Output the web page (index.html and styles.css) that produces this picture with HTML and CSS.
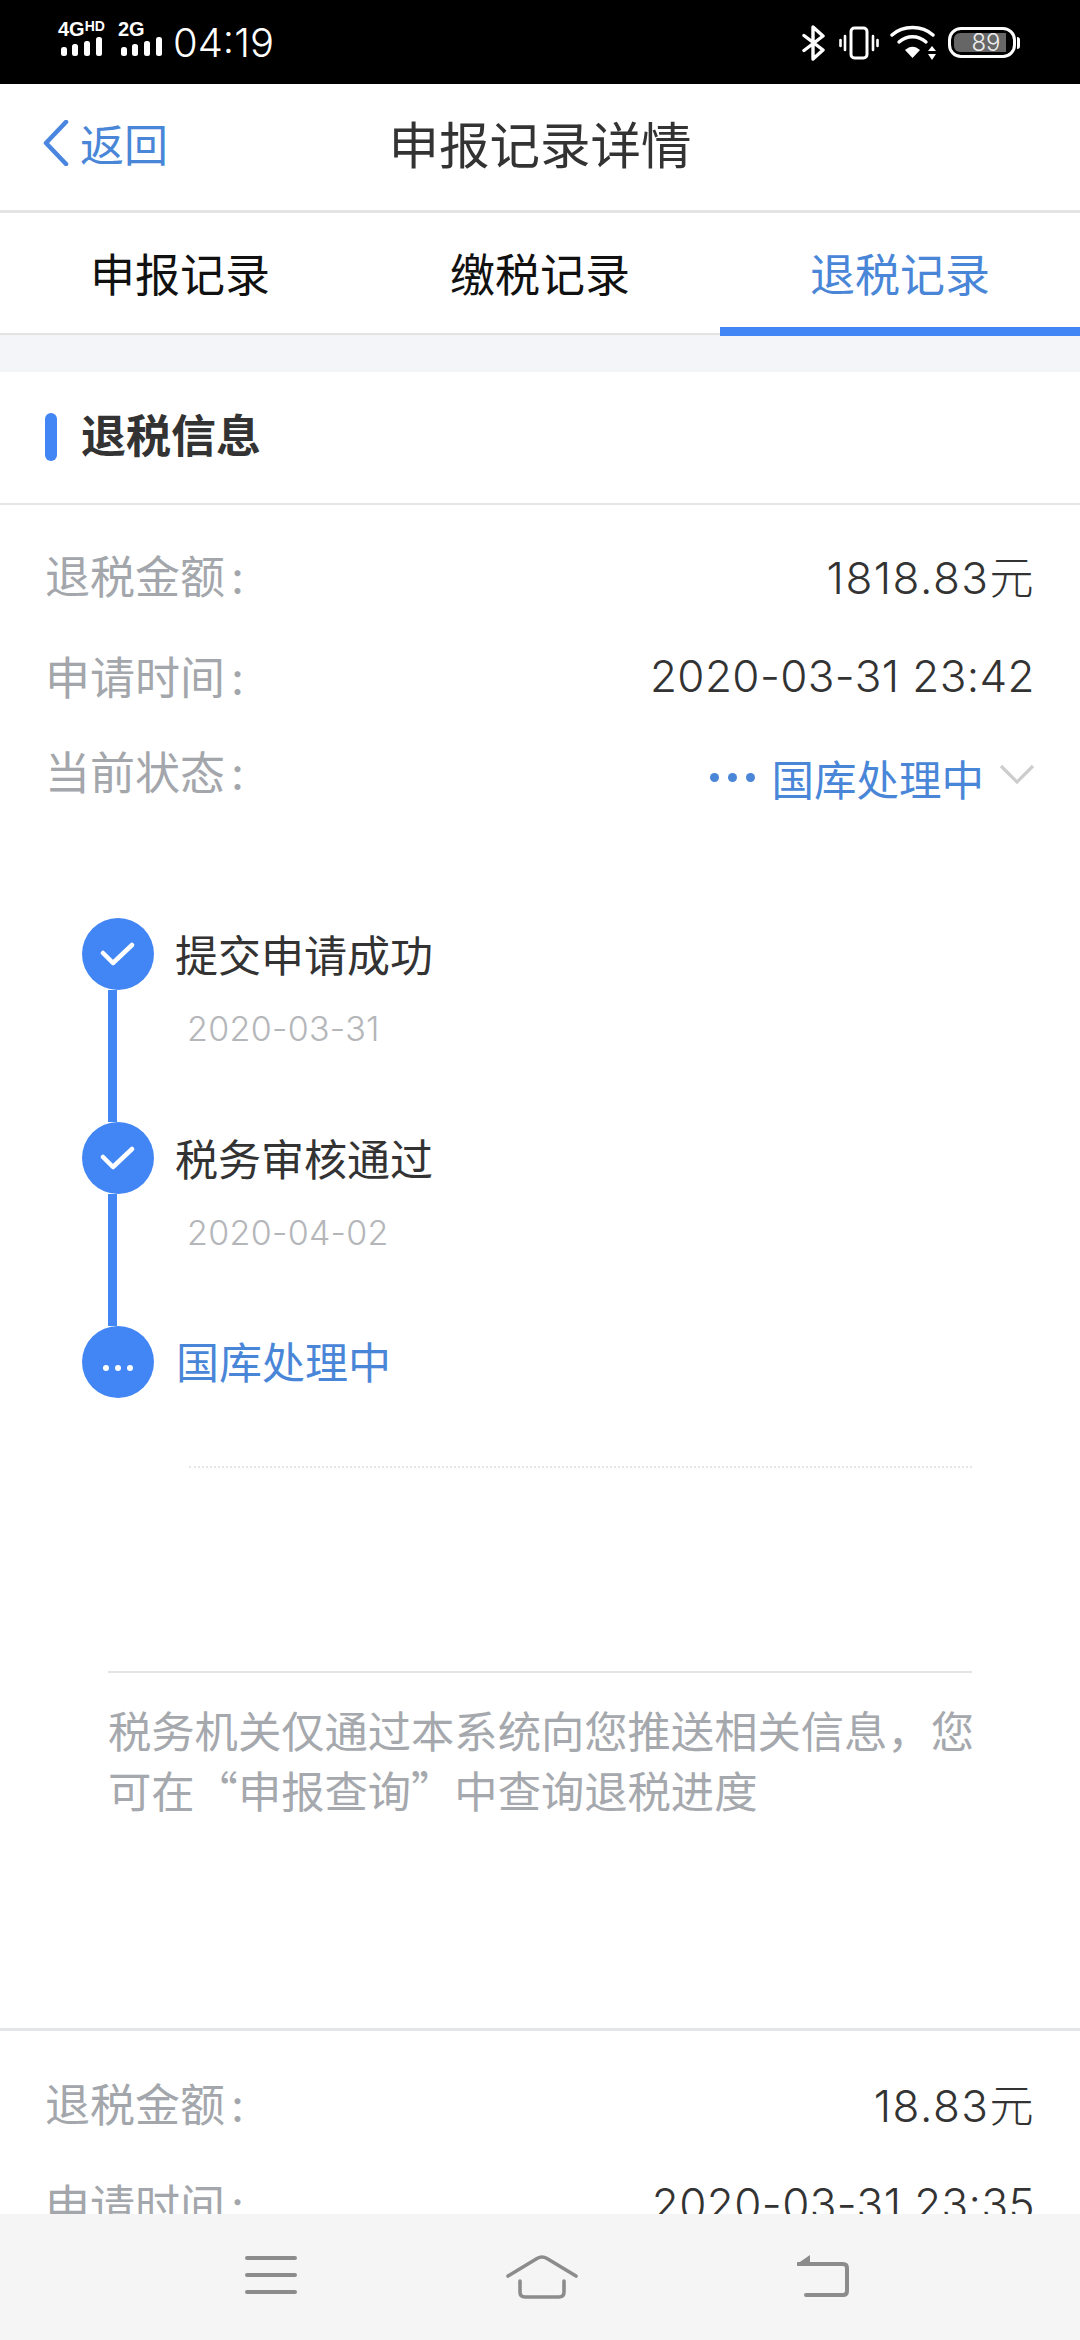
FILE: index.html
```html
<!DOCTYPE html>
<html lang="zh-CN">
<head>
    <meta charset="UTF-8">
    <meta name="viewport" content="width=device-width, initial-scale=1.0">
    <title>申报记录详情</title>
    <link rel="stylesheet" href="styles.css">
</head>

<body>
<div class="page">
    <!-- Status bar -->
    <div class="statusbar">
        <div class="signal">
            <div class="net net-first">
                <span class="net-label">4G<sup>HD</sup></span>
                <svg width="46" height="20" viewBox="0 0 46 20"><g fill="#fff"><rect x="3" y="10" width="6" height="9" rx="2.500"/><rect x="14" y="7" width="6" height="12" rx="2.500"/><rect x="26" y="4" width="6" height="15" rx="2.500"/><rect x="38" y="0" width="6" height="19" rx="2.500"/></g></svg>
            </div>
            <div class="net net-second">
                <span class="net-label">2G</span>
                <svg width="46" height="20" viewBox="0 0 46 20"><g fill="#fff"><rect x="3" y="10" width="6" height="9" rx="2.500"/><rect x="14" y="7" width="6" height="12" rx="2.500"/><rect x="26" y="4" width="6" height="15" rx="2.500"/><rect x="38" y="0" width="6" height="19" rx="2.500"/></g></svg>
            </div>
            <span class="clock">04:19</span>
        </div>
        <div class="sys-icons">
            <svg width="24" height="36" viewBox="0 0 24 36" fill="none" stroke="#fff" stroke-width="3.400" stroke-linecap="round" stroke-linejoin="round"><path d="M2 10.500 21 25 11 34V2l10 9L2 25.500"/></svg>
            <svg class="ic-vibrate" width="40" height="34" viewBox="0 0 40 34" fill="none" stroke="#fff" stroke-linecap="round"><rect x="12" y="2" width="16" height="30" rx="3.500" stroke-width="3"/><path d="M6 10v14M34 10v14M1.500 14v6M38.500 14v6" stroke-width="2.600"/></svg>
            <svg class="ic-wifi" width="48" height="36" viewBox="0 0 48 36" fill="none"><g stroke="#fff" stroke-width="3.400" stroke-linecap="round"><path d="M2 10C13 0 32 0 43 10"/><path d="M9 17C17 10 28 10 36 17"/></g><path d="M15 25c5-4.500 10-4.500 15 0l-7.500 8z" fill="#fff"/><path d="M42 21l4 5h-8zM42 35l4-6h-8z" fill="#fff"/></svg>
            <div class="battery">
                <div class="battery-body"><div class="battery-fill"><span>89</span></div></div>
                <div class="battery-nub"></div>
            </div>
        </div>
    </div>

    <!-- Title bar -->
    <header class="titlebar">
        <a class="back">
            <svg width="26" height="46" viewBox="0 0 26 46" fill="none"><path d="M23 2 3 23l20 21" stroke="#4a86e0" stroke-width="4.500" stroke-linecap="round" stroke-linejoin="round"/></svg>
            <span>返回</span>
        </a>
        <h1>申报记录详情</h1>
    </header>

    <nav class="tabs">
        <div class="tab">申报记录</div>
        <div class="tab">缴税记录</div>
        <div class="tab active">退税记录</div>
    </nav>

    <main class="content">
        <section class="card">
            <h2 class="card-title">退税信息</h2>

            <div class="rows">
                <div class="row">
                    <span class="row-label">退税金额<span class="colon">:</span></span>
                    <span class="row-value row-amount">1818.83元</span>
                </div>
                <div class="row">
                    <span class="row-label">申请时间<span class="colon">:</span></span>
                    <span class="row-value">2020-03-31 23:42</span>
                </div>
                <div class="row">
                    <span class="row-label">当前状态<span class="colon">:</span></span>
                    <span class="row-status">
                        <span class="dots"><i></i><i></i><i></i></span>
                        <span>国库处理中</span>
                        <svg width="36" height="20" viewBox="0 0 36 20" fill="none"><path d="M2 2l16 16L34 2" stroke="#cdcdcd" stroke-width="3.200"/></svg>
                    </span>
                </div>
            </div>

            <!-- Progress steps -->
            <ol class="steps">
                <li class="step">
                    <div class="marker">
                        <div class="circle">
                            <svg width="36" height="28" viewBox="0 0 36 28" fill="none"><path d="M3 13l10 10L32 5" stroke="#fff" stroke-width="4.500" stroke-linecap="round" stroke-linejoin="round"/></svg>
                        </div>
                        <div class="connector"></div>
                    </div>
                    <div class="step-text">
                        <div class="step-title">提交申请成功</div>
                        <div class="step-date">2020-03-31</div>
                    </div>
                </li>
                <li class="step">
                    <div class="marker">
                        <div class="circle">
                            <svg width="36" height="28" viewBox="0 0 36 28" fill="none"><path d="M3 13l10 10L32 5" stroke="#fff" stroke-width="4.500" stroke-linecap="round" stroke-linejoin="round"/></svg>
                        </div>
                        <div class="connector"></div>
                    </div>
                    <div class="step-text">
                        <div class="step-title">税务审核通过</div>
                        <div class="step-date">2020-04-02</div>
                    </div>
                </li>
                <li class="step step-last">
                    <div class="marker">
                        <div class="circle circle-more"><i></i><i></i><i></i></div>
                    </div>
                    <div class="step-text">
                        <div class="step-title step-current">国库处理中</div>
                    </div>
                </li>
            </ol>
            <div class="dotted"></div>

            <div class="note-rule"></div>
            <div class="note">税务机关仅通过本系统向您推送相关信息，您可在“申报查询”中查询退税进度</div>
        </section>

        <section class="card card-second">
            <div class="rows">
                <div class="row">
                    <span class="row-label">退税金额<span class="colon">:</span></span>
                    <span class="row-value row-amount">18.83元</span>
                </div>
                <div class="row">
                    <span class="row-label">申请时间<span class="colon">:</span></span>
                    <span class="row-value">2020-03-31 23:35</span>
                </div>
            </div>
        </section>
    </main>

    <!-- Android nav bar -->
    <footer class="navbar">
        <svg width="52" height="40" viewBox="0 0 52 40" fill="none" stroke="#8c8c8c" stroke-width="4" stroke-linecap="round"><path d="M2 3h48M2 20h48M2 37h48"/></svg>
        <svg class="ic-home" width="72" height="44" viewBox="0 0 72 44" fill="none" stroke="#8c8c8c" stroke-width="3.600" stroke-linecap="round" stroke-linejoin="round"><path d="M2 21 31 3.500q5-3 10 0L70 21"/><path d="M14 26v11q0 5 5 5h34q5 0 5-5V26"/></svg>
        <svg width="52" height="42" viewBox="0 0 52 42" fill="none"><path d="M1 9h45q4 0 4 4v23q0 4-4 4H9" stroke="#8c8c8c" stroke-width="4" stroke-linecap="round"/><path d="M13 0v9H0z" fill="#8c8c8c"/></svg>
    </footer>
</div>
</body>
</html>
```

FILE: styles.css
```css
* {
    box-sizing: border-box;
}

body {
    margin: 0;
    background-color: #fff;
    font-family: "Noto Sans CJK SC", sans-serif;
}

.page {
    display: flex;
    flex-direction: column;
    width: 1080px;
    height: 2340px;
    overflow: hidden;
}

/* status bar */
.statusbar {
    display: flex;
    justify-content: space-between;
    flex: 0 0 84px;
    background-color: #000;
    color: #fff;
    padding: 0 60px 0 58px;
}

.signal {
    display: flex;
    align-items: flex-start;
}

.net {
    display: flex;
    flex-direction: column;
    padding-top: 21px;
}

.net-first {
    width: 60px;
}

.net-second {
    width: 55px;
}

.net-label {
    height: 16px;
    font-family: "Liberation Sans", sans-serif;
    font-size: 20px;
    font-weight: 700;
    line-height: 17px;
    white-space: nowrap;
}

.net-label sup {
    font-size: 14px;
    line-height: 0;
    vertical-align: 5px;
}

.clock {
    padding-top: 19px;
    font-family: Inter, sans-serif;
    font-size: 40px;
    font-weight: 300;
    line-height: 47px;
}

.sys-icons {
    display: flex;
    align-items: flex-start;
    padding-top: 25px;
    margin-left: 3px;
}

.ic-vibrate {
    margin: 1px 0 0 13px;
}

.ic-wifi {
    margin: 0 0 0 11px;
}

.battery {
    display: flex;
    align-items: center;
    height: 31px;
    margin: 2px 0 0 10px;
}

.battery-body {
    width: 68px;
    height: 31px;
    padding: 3px;
    border: 3px solid #fff;
    border-radius: 13px;
}

.battery-fill {
    display: flex;
    align-items: center;
    justify-content: center;
    width: 52px;
    height: 19px;
    background-color: #666;
    border-radius: 6px 0 0 6px;
    color: #eee;
    font-family: Inter, sans-serif;
    font-size: 24px;
    font-weight: 300;
    line-height: 19px;
    padding-left: 12px;
}

.battery-nub {
    width: 3px;
    height: 12px;
    margin-left: 1px;
    background-color: #fff;
    border-radius: 0 3px 3px 0;
}

/* title bar */
.titlebar {
    position: relative;
    display: flex;
    align-items: center;
    justify-content: center;
    flex: 0 0 129px;
    border-bottom: 3px solid #e4e4e4;
    padding-bottom: 11px;
}

.titlebar h1 {
    margin: 0;
    color: #333;
    font-size: 50.500px;
    font-weight: 400;
    line-height: 60px;
}

.back {
    position: absolute;
    left: 43px;
    top: 27px;
    display: flex;
    align-items: center;
    gap: 11px;
    color: #4a86d8;
    font-size: 44px;
}

/* tabs */
.tabs {
    display: flex;
    flex: 0 0 122px;
    min-height: 0;
    border-bottom: 2px solid #e4e4e4;
}

.tab {
    flex: 1;
    padding-top: 30px;
    text-align: center;
    color: #111;
    font-size: 45px;
    line-height: 60px;
}

.tab.active {
    position: relative;
    height: 123px;
    border-bottom: 9px solid #4285f4;
    color: #4a86d8;
}

/* content */
.content {
    flex: 1;
    min-height: 0;
    overflow: hidden;
    background-color: #f4f5f9;
    padding-top: 37px;
}

.card {
    height: 1656px;
    background-color: #fff;
}

.card-second {
    height: auto;
    border-top: 3px solid #e3e5e8;
    padding-bottom: 60px;
}

.card-title {
    position: relative;
    height: 133px;
    margin: 0;
    padding: 32px 0 0 81px;
    border-bottom: 2px solid #e6e6e6;
    color: #333;
    font-size: 45px;
    font-weight: 700;
    line-height: 60px;
}

.card-title::before {
    content: "";
    position: absolute;
    left: 45px;
    top: 41px;
    width: 12px;
    height: 48px;
    background-color: #4285f4;
    border-radius: 6px;
}

.rows {
    padding: 21px 45px 0 45px;
}

.card-second .rows {
    padding-top: 23px;
}

.row {
    display: flex;
    align-items: center;
    justify-content: space-between;
    height: 97px;
}

.row:nth-child(2) {
    margin-top: 4px;
}

.row:nth-child(3) {
    margin-top: -2px;
}

.row-label {
    color: #a3a6ab;
    font-size: 45px;
}

.colon {
    margin-left: 6px;
    font-family: Inter, sans-serif;
}

.row-value {
    color: #333;
    font-family: Inter, "Noto Sans CJK SC", sans-serif;
    font-size: 44px;
    font-weight: 300;
    letter-spacing: 0.400px;
}

.row-amount {
    letter-spacing: 1.500px;
}

.row-status {
    display: flex;
    align-items: center;
    margin-top: 14px;
    color: #4a86d8;
    font-size: 42.500px;
}

.row-status svg {
    margin-left: 15px;
    margin-top: -8px;
}

.dots {
    display: flex;
    gap: 9px;
    margin-right: 16px;
}

.dots i {
    width: 9px;
    height: 9px;
    background-color: #4a86d8;
    border-radius: 50%;
}

/* steps */
.steps {
    list-style: none;
    margin: 0;
    padding: 99px 0 0 82px;
}

.step {
    display: flex;
    height: 204px;
}

.step-last {
    height: 72px;
}

.marker {
    display: flex;
    flex-direction: column;
    width: 72px;
    margin-right: 21px;
}

.circle {
    display: flex;
    align-items: center;
    justify-content: center;
    flex: 0 0 72px;
    background-color: #4285f4;
    border-radius: 50%;
}

.circle-more {
    gap: 6px;
    padding-top: 11px;
}

.circle-more i {
    width: 6px;
    height: 6px;
    background-color: #fff;
    border-radius: 50%;
}

.connector {
    flex: 1;
    width: 9px;
    margin-left: 26px;
    background-color: #4285f4;
}

.step-title {
    margin-top: -1px;
    color: #333;
    font-size: 43px;
    line-height: 72px;
}

.step-current {
    margin-top: -2px;
    margin-left: 1px;
    color: #4a86d8;
}

.step-date {
    margin: 19px 0 0 12px;
    color: #b4b6b9;
    font-family: Inter, sans-serif;
    font-size: 34px;
    font-weight: 300;
    letter-spacing: 0.300px;
    line-height: 42px;
}

.dotted {
    width: 783px;
    margin: 68px 0 0 189px;
    border-top: 2px dotted #e6e6e6;
}

.note-rule {
    width: 864px;
    margin: 203px 0 0 108px;
    border-top: 2px solid #e4e4e4;
}

.note {
    width: 872px;
    margin-left: 108px;
    padding-top: 26px;
    color: #a5a8ad;
    font-size: 43.300px;
    line-height: 60px;
}

/* bottom nav */
.navbar {
    display: flex;
    align-items: flex-start;
    justify-content: space-between;
    flex: 0 0 126px;
    padding: 41px 231px 0 245px;
    background-color: #f5f5f5;
}

.ic-home {
    margin-right: 10px;
}
```
